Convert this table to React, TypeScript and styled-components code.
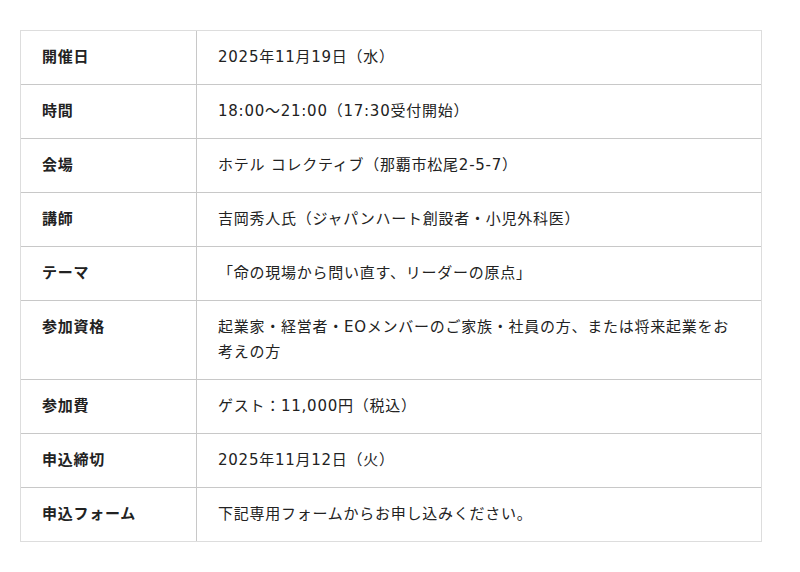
import React from "react";
import styled, { createGlobalStyle } from "styled-components";

const GlobalStyle = createGlobalStyle`
  body {
    margin: 0;
    background: #fff;
    font-family: "DejaVu Sans", "Noto Sans CJK JP", sans-serif;
    color: #222;
  }
`;

const Page = styled.main`
  padding: 30px 20px;
`;

const InfoTable = styled.table`
  width: 742px;
  border-collapse: separate;
  border-spacing: 0;
  border: 1px solid #ddd;
  font-family: "DejaVu Sans", "Noto Sans CJK JP", sans-serif;
  font-size: 15px;
  line-height: 25px;
  letter-spacing: 0.05em;
  color: #222;
`;

const Row = styled.tr`
  &:not(:last-child) > * {
    border-bottom: 1px solid #c8c8c8;
  }
`;

const Label = styled.th`
  width: 133px;
  padding: 14px 21px;
  border-right: 1px solid #c8c8c8;
  text-align: left;
  vertical-align: top;
  font-weight: bold;
`;

const Value = styled.td`
  padding: 14px 21px;
  vertical-align: top;
  font-weight: normal;
`;

const rows: [string, string][] = [
  ["開催日", "2025年11月19日（水）"],
  ["時間", "18:00〜21:00（17:30受付開始）"],
  ["会場", "ホテル コレクティブ（那覇市松尾2-5-7）"],
  ["講師", "吉岡秀人氏（ジャパンハート創設者・小児外科医）"],
  ["テーマ", "「命の現場から問い直す、リーダーの原点」"],
  ["参加資格", "起業家・経営者・EOメンバーのご家族・社員の方、または将来起業をお考えの方"],
  ["参加費", "ゲスト：11,000円（税込）"],
  ["申込締切", "2025年11月12日（火）"],
  ["申込フォーム", "下記専用フォームからお申し込みください。"],
];

export default function App() {
  return (
    <>
      <GlobalStyle />
      <Page>
        <InfoTable>
          <tbody>
            {rows.map(([label, value]) => (
              <Row key={label}>
                <Label>{label}</Label>
                <Value>{value}</Value>
              </Row>
            ))}
          </tbody>
        </InfoTable>
      </Page>
    </>
  );
}
